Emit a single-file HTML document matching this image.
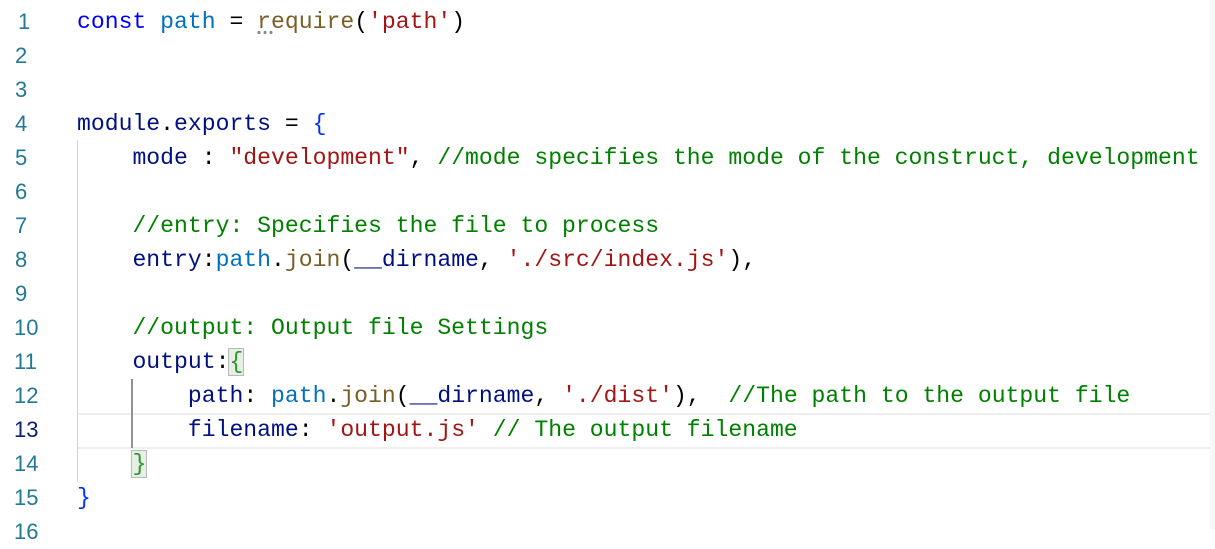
<!DOCTYPE html>
<html><head><style>
body{margin:0;width:1215px;height:529px;overflow:hidden;background:#fff;position:relative;font-family:"Liberation Mono",monospace;}
.ln{position:absolute;left:0;width:60px;font-family:"Liberation Sans",sans-serif;font-size:22px;color:#237893;height:34px;line-height:34px;}
.c{position:absolute;left:77px;white-space:pre;font-size:23.1px;height:34px;line-height:34px;color:#000;}
.k{color:#0000ff}.v{color:#0070c1}.f{color:#795e26}.s{color:#a31515}.m{color:#008000}.p{color:#001080}.b1{color:#0431fa}.b2{color:#319331}
.box{outline:1px solid #b9b9b9;background:#e6efe4}
</style></head><body>
<div style="position:absolute;left:78px;top:413px;width:1137px;height:32px;border-top:2px solid #eeeeee;border-bottom:2px solid #eeeeee"></div>
<div style="position:absolute;left:77px;top:140px;width:1px;height:342px;background:#d3d3d3"></div>
<div style="position:absolute;left:131px;top:379px;width:2px;height:69px;background:#939393"></div>
<div style="position:absolute;left:1210px;top:0;width:5px;height:529px;background:#f7f7f7"></div>

<div class="ln" style="top:5px;left:18px">1</div>
<div class="ln" style="top:39px;left:15px">2</div>
<div class="ln" style="top:73px;left:15px">3</div>
<div class="ln" style="top:107px;left:15px">4</div>
<div class="ln" style="top:141px;left:15px">5</div>
<div class="ln" style="top:175px;left:15px">6</div>
<div class="ln" style="top:209px;left:15px">7</div>
<div class="ln" style="top:243px;left:15px">8</div>
<div class="ln" style="top:277px;left:15px">9</div>
<div class="ln" style="top:311px;left:14px">10</div>
<div class="ln" style="top:345px;left:14px">11</div>
<div class="ln" style="top:379px;left:14px">12</div>
<div class="ln" style="top:413px;left:14px;color:#0b216f">13</div>
<div class="ln" style="top:447px;left:14px">14</div>
<div class="ln" style="top:481px;left:14px">15</div>
<div class="ln" style="top:515px;left:14px">16</div>

<div class="c" style="top:5px"><span class="k">const</span> <span class="v">path</span> = <span class="f">require</span>(<span class="s">'path'</span>)</div>
<div style="position:absolute;left:256px;top:31px;width:18px;height:3px;background:radial-gradient(circle,#888 45%,transparent 50%) 0 0/6px 3px"></div>
<div class="c" style="top:107px"><span class="p">module</span>.<span class="p">exports</span> = <span class="b1">{</span></div>
<div class="c" style="top:141px">    <span class="p">mode</span> : <span class="s">"development"</span>, <span class="m">//mode specifies the mode of the construct, development :</span></div>
<div class="c" style="top:209px">    <span class="m">//entry: Specifies the file to process</span></div>
<div class="c" style="top:243px">    <span class="p">entry</span>:<span class="v">path</span>.<span class="f">join</span>(<span class="p">__dirname</span>, <span class="s">'./src/index.js'</span>),</div>
<div class="c" style="top:311px">    <span class="m">//output: Output file Settings</span></div>
<div class="c" style="top:345px">    <span class="p">output</span>:<span class="b2 box">{</span></div>
<div class="c" style="top:379px">        <span class="p">path</span>: <span class="v">path</span>.<span class="f">join</span>(<span class="p">__dirname</span>, <span class="s">'./dist'</span>),  <span class="m">//The path to the output file</span></div>
<div class="c" style="top:413px">        <span class="p">filename</span>: <span class="s">'output.js'</span> <span class="m">// The output filename</span></div>
<div class="c" style="top:447px">    <span class="b2 box">}</span></div>
<div class="c" style="top:481px"><span class="b1">}</span></div>
</body></html>
